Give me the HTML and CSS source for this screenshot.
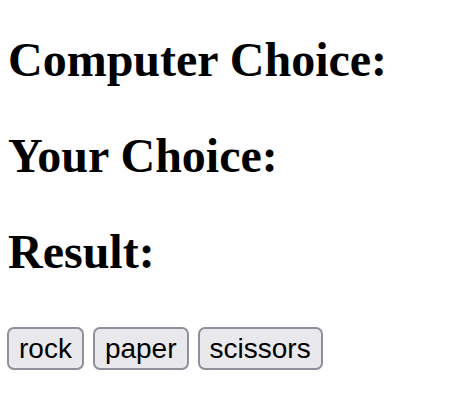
FILE: index.html
```html
<!DOCTYPE html>
<html>
<head>
<meta charset="utf-8">
<link rel="stylesheet" href="styles.css">
</head>
<body>
<h2 class="label first">Computer Choice:</h2>
<h2 class="label">Your Choice:</h2>
<h2 class="label">Result:</h2>
<div class="choices">
  <button class="choice">rock</button>
  <button class="choice">paper</button>
  <button class="choice">scissors</button>
</div>
</body>
</html>
```
FILE: styles.css
```css
body {
  margin: 8px 6px;
  font-family: "Liberation Serif", "Times New Roman", serif;
  color: #000;
  background: #fff;
}
.label {
  font-size: 48px;
  font-weight: bold;
  margin: 41px 2px;
}
.label.first {
  margin-top: 24px;
}
.choices {
  display: flex;
  gap: 9px;
  padding-top: 7px;
  padding-left: 1px;
}
.choice {
  font-family: "Liberation Sans", Arial, sans-serif;
  font-size: 28px;
  line-height: 33px;
  color: #000;
  background: #e9e9ed;
  border: 2px solid #8f8f9d;
  border-radius: 7px;
  padding: 3px 10px;
  margin: 0;
}
```
